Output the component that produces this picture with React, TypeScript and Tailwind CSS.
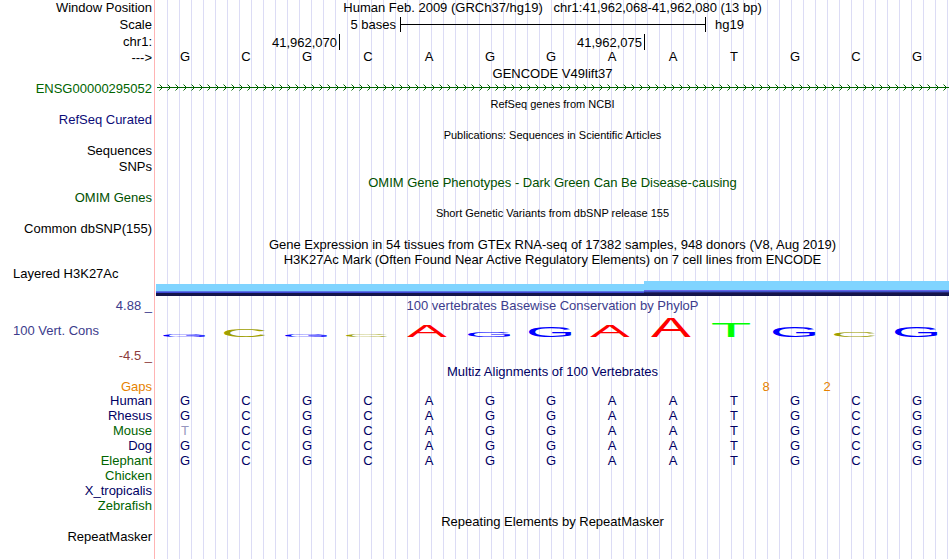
import React from "react";

const SEQUENCE = "GCGCAGGAATGCG";

const ALIGNMENTS = [
  { species: "Human", color: "text-[#000064]", bases: SEQUENCE },
  { species: "Rhesus", color: "text-[#000064]", bases: SEQUENCE },
  { species: "Mouse", color: "text-[#006400]", bases: "TCGCAGGAATGCG" },
  { species: "Dog", color: "text-[#000064]", bases: SEQUENCE },
  { species: "Elephant", color: "text-[#006400]", bases: SEQUENCE },
  { species: "Chicken", color: "text-[#006400]", bases: "" },
  { species: "X_tropicalis", color: "text-[#000064]", bases: "" },
  { species: "Zebrafish", color: "text-[#006400]", bases: "" },
];

type Glyph = { box: string; width: string; color: string };

const GLYPHS: Record<string, Glyph> = {
  A: { box: "0 -69 67 69", width: "w-10", color: "fill-[#ff0000]" },
  C: { box: "5 -70 63 71", width: "w-[41px]", color: "fill-[#a0a000]" },
  G: { box: "5 -70 67 71", width: "w-[43px]", color: "fill-[#0000ff]" },
  T: { box: "2 -69 57 69", width: "w-[38px]", color: "fill-[#00ff00]" },
};

// Height of every base in the PhyloP logo, in pixels.
const CONSERVATION = [3, 8, 2, 2, 11, 5, 11, 11, 19, 14, 11, 5, 10];

function Row({
  label,
  labelColor = "",
  height = "h-[15px]",
  align = "justify-end",
  children,
}: {
  label?: string;
  labelColor?: string;
  height?: string;
  align?: string;
  children?: React.ReactNode;
}) {
  return (
    <div className={`flex ${height}`}>
      <div className={`flex w-[156px] shrink-0 items-center pr-1 pl-[13px] whitespace-nowrap ${align} ${labelColor}`}>
        {label}
      </div>
      <div className="min-w-0 flex-1">{children}</div>
    </div>
  );
}

function Title({ small = false, color = "", children }: { small?: boolean; color?: string; children: React.ReactNode }) {
  return (
    <div className={`flex h-full items-center justify-center whitespace-pre ${small ? "text-[11px]" : ""} ${color}`}>
      {children}
    </div>
  );
}

function ScaleBar() {
  return (
    <div className="grid h-full grid-cols-13 items-center">
      <span className="col-span-4 pr-1 text-right">5 bases</span>
      <div className="col-span-5 -mr-px flex h-[15px] items-center border-x border-black">
        <div className="h-px flex-1 bg-black" />
      </div>
      <span className="col-span-4 pl-2.5">hg19</span>
    </div>
  );
}

function Ruler() {
  return (
    <div className="grid h-full grid-cols-13">
      <span className="col-span-3 pt-px pr-0.5 text-right">41,962,070</span>
      <span className="col-span-5 border-l border-black pt-px pr-0.5 text-right">41,962,075</span>
      <span className="col-span-5 border-l border-black" />
    </div>
  );
}

function GeneLine() {
  return (
    <svg className="block h-full w-full" aria-hidden="true">
      <defs>
        <pattern id="strand" x="3" y="3" width="8" height="7" patternUnits="userSpaceOnUse">
          <path d="M0.5 0.5 L3.5 3.5 L0.5 6.5" fill="none" stroke="#006400" strokeWidth="1" />
        </pattern>
      </defs>
      <rect x="1" y="6" width="100%" height="1" fill="#006400" />
      <rect x="3" y="3" width="100%" height="7" fill="url(#strand)" />
    </svg>
  );
}

function Acetylation() {
  return (
    <div className="grid h-full grid-cols-13 items-end">
      <div className="col-span-8">
        <div className="h-[7px] bg-[#80d4ff]" />
        <div className="h-px bg-[#5a78e6]" />
        <div className="h-px bg-[#3c46d2]" />
        <div className="h-[3px] bg-[#14144b]" />
      </div>
      <div className="col-span-5">
        <div className="h-[9px] bg-[#80d4ff]" />
        <div className="h-px bg-[#6464e6]" />
        <div className="h-px bg-[#3c50c8]" />
        <div className="h-px bg-[#282878]" />
        <div className="h-[3px] bg-[#14144b]" />
      </div>
    </div>
  );
}

function Logo() {
  return (
    <div className="grid h-[23px] grid-cols-13 items-end">
      {CONSERVATION.map((height, i) => {
        const glyph = GLYPHS[SEQUENCE[i]];
        return (
          <svg
            key={i}
            viewBox={glyph.box}
            preserveAspectRatio="none"
            className={`ml-[7px] block overflow-visible ${glyph.width} ${glyph.color}`}
            style={{ height }}
          >
            <text fontSize="100">{SEQUENCE[i]}</text>
          </svg>
        );
      })}
    </div>
  );
}

function AlignmentTable() {
  return (
    <table className="w-full table-fixed border-collapse">
      <tbody>
        {ALIGNMENTS.map(({ species, color, bases }) => (
          <tr key={species} className="h-[15px]">
            <th scope="row" className={`w-[156px] p-0 pr-1 text-right font-normal ${color}`}>
              {species}
            </th>
            {SEQUENCE.split("").map((reference, i) => (
              <td
                key={i}
                className={`p-0 pr-[3px] text-center ${bases[i] === reference ? "text-[#000064]" : "text-[#9696be]"}`}
              >
                {bases[i]}
              </td>
            ))}
          </tr>
        ))}
      </tbody>
    </table>
  );
}

export default function App() {
  return (
    <main className="relative min-h-screen bg-white pr-px pb-[15px] font-['Liberation_Sans',Arial,sans-serif] text-[13px] leading-[15px] text-black">
      <div className="absolute inset-y-0 left-[154px] w-px bg-[#ffb4b4]" />
      <div className="absolute inset-y-0 right-px left-[156px] bg-[repeating-linear-gradient(to_right,transparent_0px_11px,#dcdcf5_11px_12px)]" />

      <div className="relative">
        <Row label="Window Position">
          <Title>{"Human Feb. 2009 (GRCh37/hg19)   chr1:41,962,068-41,962,080 (13 bp)"}</Title>
        </Row>
        <Row label="Scale" height="h-[19px]">
          <ScaleBar />
        </Row>
        <Row label="chr1:">
          <Ruler />
        </Row>
        <Row label="--->" height="h-4">
          <div className="grid grid-cols-13 text-center">
            {SEQUENCE.split("").map((base, i) => (
              <span key={i} className="pr-[3px]">
                {base}
              </span>
            ))}
          </div>
        </Row>
        <Row height="h-4">
          <Title>GENCODE V49lift37</Title>
        </Row>
        <Row label="ENSG00000295052" labelColor="text-[#006400]">
          <GeneLine />
        </Row>
        <Row height="h-4">
          <Title small>RefSeq genes from NCBI</Title>
        </Row>
        <Row label="RefSeq Curated" labelColor="text-[#0c0c78]" />
        <Row height="h-4">
          <Title small>Publications: Sequences in Scientific Articles</Title>
        </Row>
        <Row label="Sequences" />
        <Row label="SNPs" height="h-4" />
        <Row height="h-4">
          <Title color="text-[#005000]">OMIM Gene Phenotypes - Dark Green Can Be Disease-causing</Title>
        </Row>
        <Row label="OMIM Genes" labelColor="text-[#005000]" />
        <Row height="h-4">
          <Title small>Short Genetic Variants from dbSNP release 155</Title>
        </Row>
        <Row label="Common dbSNP(155)" />
        <Row height="h-4">
          <Title>Gene Expression in 54 tissues from GTEx RNA-seq of 17382 samples, 948 donors (V8, Aug 2019)</Title>
        </Row>
        <Row>
          <Title>H3K27Ac Mark (Often Found Near Active Regulatory Elements) on 7 cell lines from ENCODE</Title>
        </Row>
        <Row label="Layered H3K27Ac" height="h-[29px]" align="justify-start pb-4">
          <Acetylation />
        </Row>
        <Row label="4.88 _" height="h-[18px]" labelColor="text-[#3c3c8c]">
          <Title color="text-[#3c3c8c]">100 vertebrates Basewise Conservation by PhyloP</Title>
        </Row>
        <Row label="100 Vert. Cons" height="h-[33px]" align="justify-start" labelColor="text-[#3c3c8c]">
          <Logo />
        </Row>
        <Row label="-4.5 _" height="h-[17px]" labelColor="text-[#8c3c3c]" />
        <Row>
          <Title color="text-[#000064]">Multiz Alignments of 100 Vertebrates</Title>
        </Row>
        <Row label="Gaps" height="h-3.5" labelColor="text-[#e68200]">
          <div className="grid h-full grid-cols-26 items-center text-center text-[#e68200]">
            <span className="col-span-2 col-start-20">8</span>
            <span className="col-span-2 col-start-22">2</span>
          </div>
        </Row>
        <AlignmentTable />
        <Row height="h-4">
          <Title>Repeating Elements by RepeatMasker</Title>
        </Row>
        <Row label="RepeatMasker" />
      </div>
    </main>
  );
}
